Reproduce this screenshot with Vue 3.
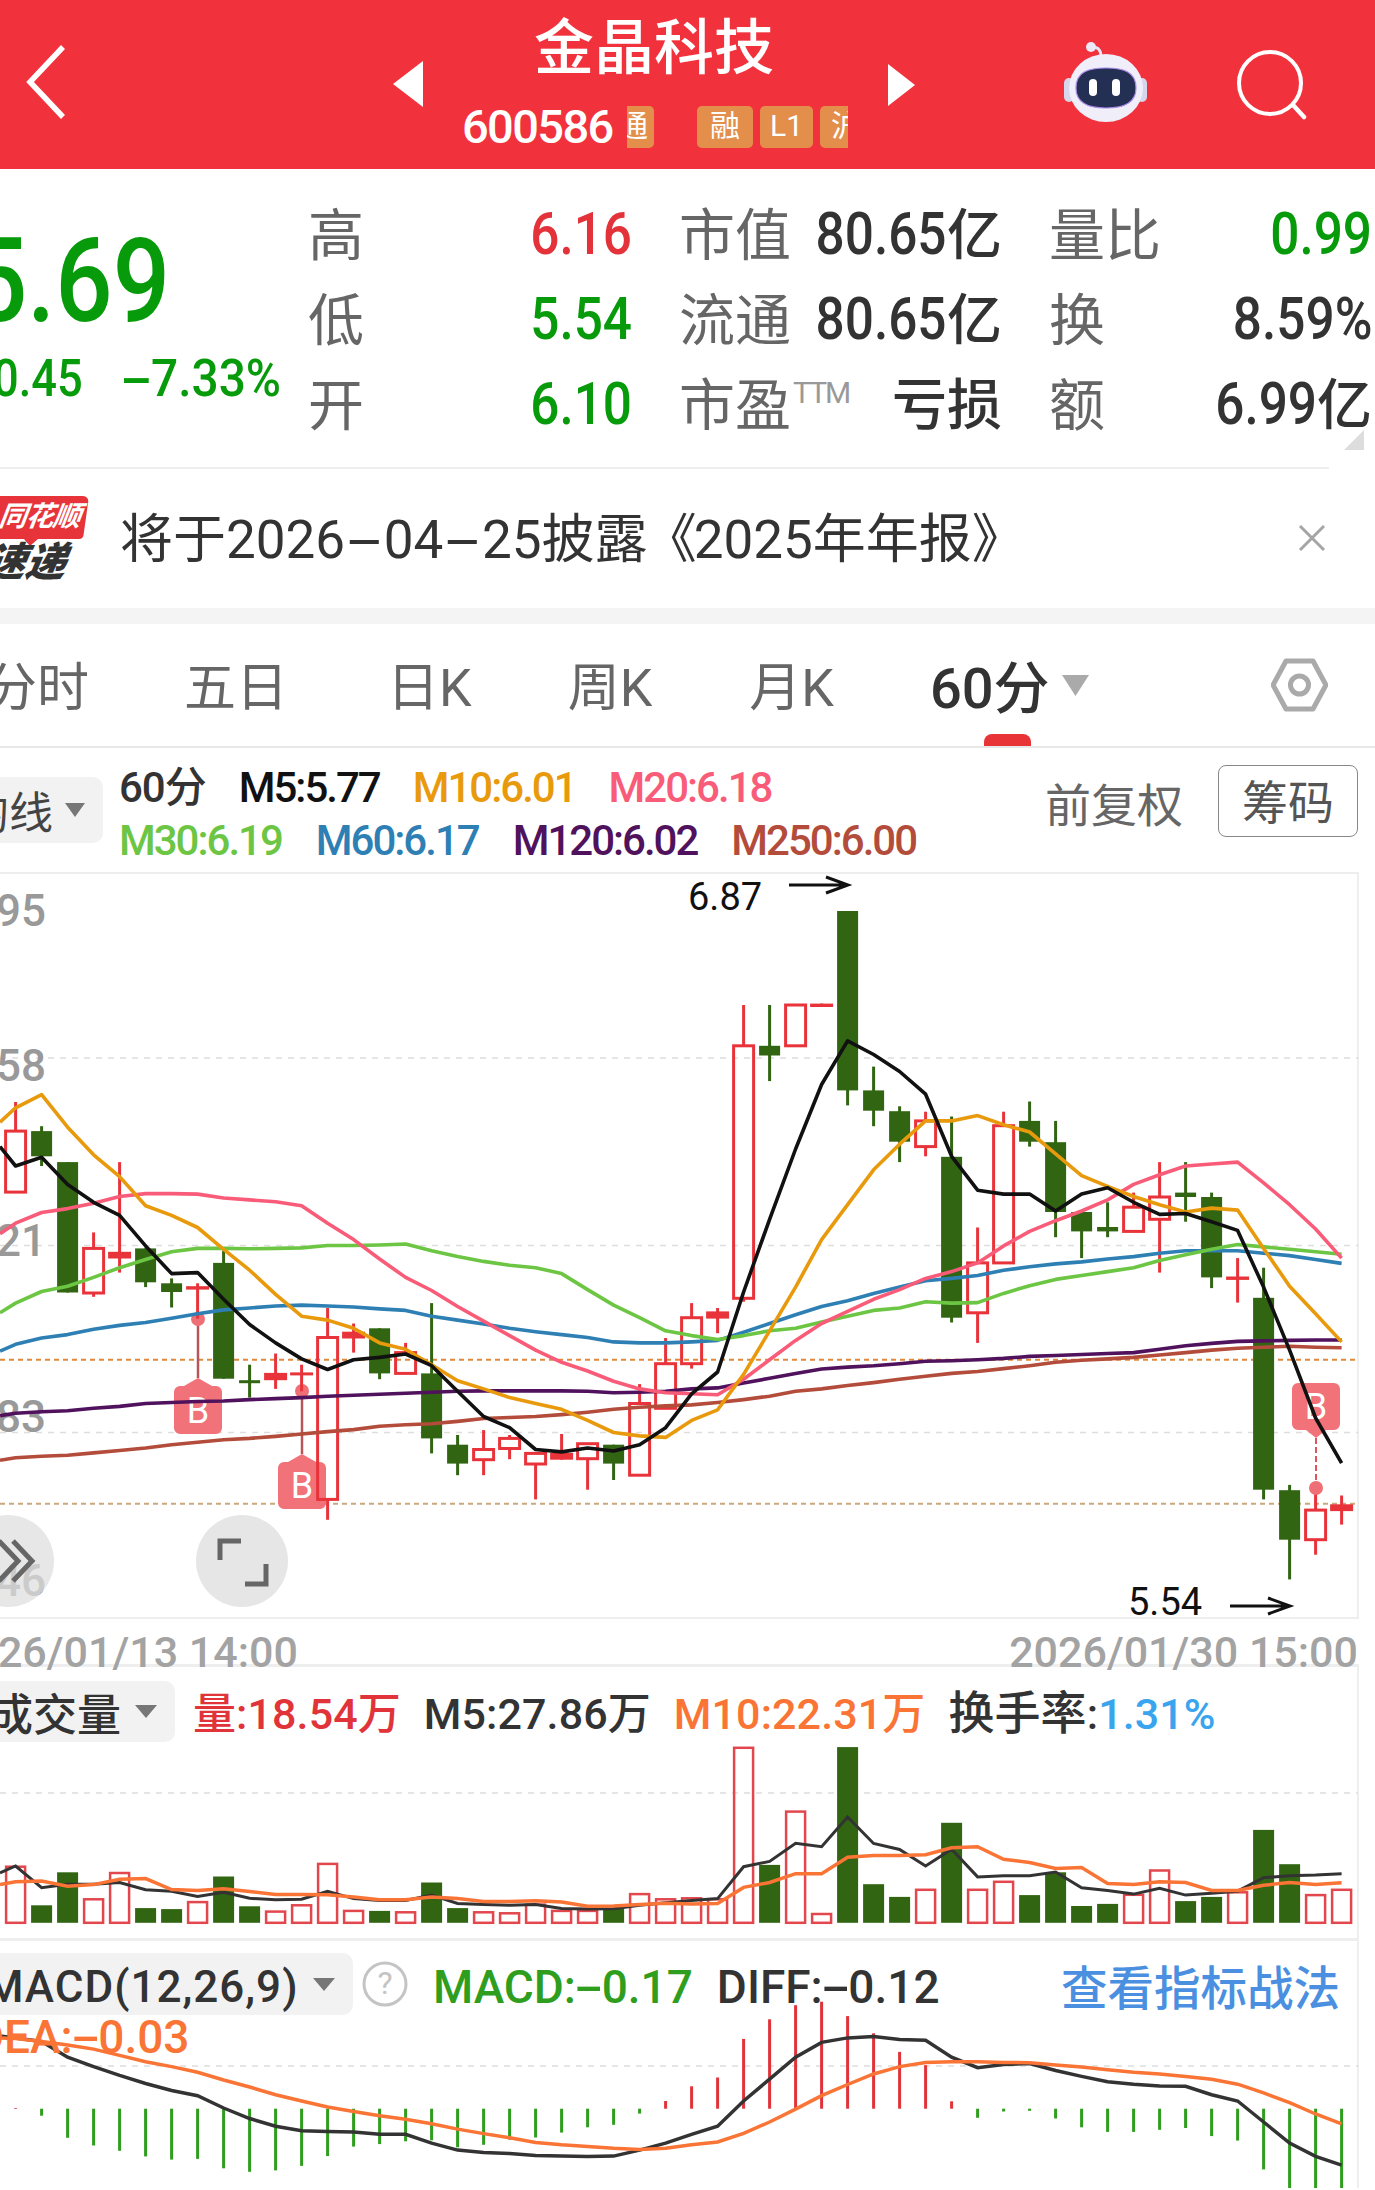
<script setup>
const X = (i) => 15.6 + 26 * i
const yMain = (z) => +(8 + z / 2.0632).toFixed(1)
const yVol = (z) => +(z / 2.851 - 26).toFixed(1)
const yMacd = (z) => +(z / 2.851 - 300).toFixed(1)

const rawCandles = [
  [458,518,644,644,'r'],[508,518,570,590,'g'],[582,582,851,851,'g'],[727,760,852,860,'r'],[582,767,781,810,'f'],
  [760,760,830,840,'g'],[822,832,850,882,'g'],[832,838,845,905,'f'],[765,790,1029,1029,'g'],[1000,1032,1038,1068,'g'],
  [977,1017,1032,1050,'f'],[1000,1016,1022,1055,'f'],[883,944,1278,1320,'r'],[915,932,946,975,'f'],[925,925,1018,1030,'g'],
  [955,975,1018,1018,'r'],[873,1018,1152,1183,'g'],[1145,1165,1204,1228,'g'],[1135,1175,1196,1228,'r'],[1145,1152,1173,1195,'r'],
  [1183,1183,1205,1278,'r'],[1143,1182,1196,1196,'f'],[1163,1163,1194,1258,'r'],[1165,1165,1204,1238,'g'],[1040,1080,1228,1228,'r'],
  [945,998,1090,1090,'r'],[873,903,998,1008,'r'],[883,890,905,935,'f'],[258,342,863,870,'r'],[258,342,362,415,'g'],
  [258,258,342,342,'r'],[255,255,262,262,'f'],[64,64,434,465,'g'],[385,434,476,508,'g'],[467,477,540,582,'g'],
  [478,497,550,570,'r'],[488,571,903,913,'g'],[717,790,893,955,'r'],[478,507,790,790,'r'],[457,497,540,550,'g'],
  [497,541,685,737,'g'],[685,685,725,780,'g'],[665,716,725,737,'g'],[645,675,725,725,'r'],[582,654,700,810,'r'],
  [582,645,654,705,'g'],[645,654,820,842,'g'],[780,818,825,872,'f'],[800,862,1258,1278,'g'],[1248,1259,1361,1443,'g'],
  [1268,1300,1361,1392,'r'],[1270,1288,1302,1330,'f']
]
const candles = rawCandles.map((c, i) => ({
  id: i,
  x: X(i),
  hi: yMain(c[0]),
  top: yMain(c[1]),
  bot: yMain(c[2]),
  lo: yMain(c[3]),
  kind: c[4]
}))

const linePoints = (vals, conv) =>
  vals.map((v, i) => `${i === 0 ? 0 : X(i - 1).toFixed(1)},${conv(v)}`).join(' ')

const maLines = [
  { id: 'm250', color: '#b34c3b', vals: [1197,1192,1189,1187,1182,1177,1172,1165,1160,1155,1152,1148,1143,1138,1134,1127,1124,1122,1117,1111,1109,1107,1103,1098,1092,1088,1085,1083,1078,1072,1065,1055,1050,1043,1037,1030,1024,1018,1014,1008,1002,995,991,988,985,980,975,970,966,964,962,964,965] },
  { id: 'm120', color: '#50125c', vals: [1105,1100,1097,1095,1090,1086,1080,1078,1076,1075,1072,1070,1068,1065,1063,1061,1059,1057,1055,1054,1054,1054,1054,1055,1058,1057,1055,1050,1048,1038,1028,1018,1009,1005,1002,998,993,992,990,987,983,981,979,977,975,968,961,956,952,951,950,949,949] },
  { id: 'm60', color: '#2e7fb4', vals: [972,958,945,938,927,919,913,904,895,887,883,879,877,879,881,885,888,900,908,916,925,932,938,944,953,955,955,953,950,933,915,897,880,868,853,840,827,822,816,805,798,792,788,782,777,770,765,765,765,770,775,783,791] },
  { id: 'm30', color: '#6cc644', vals: [893,873,849,838,820,800,783,767,760,760,761,760,759,754,754,753,751,765,777,787,795,800,812,845,877,903,930,940,948,940,930,925,912,900,888,883,870,873,872,853,837,824,816,808,800,785,773,762,752,757,762,767,772] },
  { id: 'm20', color: '#f95c78', vals: [730,708,686,678,667,653,647,647,648,656,660,664,672,708,742,782,820,847,880,910,940,970,995,1013,1034,1050,1058,1060,1062,1030,990,950,915,890,865,845,822,808,790,755,725,703,683,660,628,608,590,586,582,625,670,720,780] },
  { id: 'm10', color: '#e89a0c', vals: [500,470,443,510,567,612,672,692,717,762,805,855,900,908,925,955,968,1000,1033,1050,1068,1080,1092,1115,1140,1147,1150,1115,1093,1020,930,840,742,670,598,545,497,497,486,505,520,565,610,632,653,670,685,677,681,760,838,895,953] },
  { id: 'm5', color: '#111', vals: [550,590,572,628,665,692,755,812,810,865,917,955,988,1010,990,985,978,1002,1055,1107,1130,1175,1180,1172,1178,1165,1130,1060,1015,850,700,555,422,332,360,395,442,570,640,648,648,683,648,635,665,690,688,705,723,840,970,1110,1203] }
].map((l) => ({ id: l.id, color: l.color, points: linePoints(l.vals, yMain) }))

const volTops = [652,762,668,745,670,770,773,753,680,765,780,762,644,778,778,782,697,770,782,785,760,778,778,772,730,745,742,745,313,647,495,787,311,702,738,718,527,718,695,733,668,764,758,732,663,750,738,725,547,645,733,718]
const volBase = yVol(812)
const vols = volTops.map((t, i) => ({
  id: i,
  x: X(i),
  top: yVol(t),
  h: +(volBase - yVol(t)).toFixed(1),
  green: rawCandles[i][4] === 'g'
}))

const volM5 = linePoints([670,650,712,702,702,697,718,722,737,725,742,746,745,722,743,748,748,733,757,760,762,760,771,773,772,762,755,748,743,652,637,585,595,510,586,603,650,602,681,678,678,667,712,720,730,714,733,728,722,683,678,676,672], yVol)
const volM10 = linePoints([703,695,693,708,703,688,686,717,720,715,723,731,731,732,738,746,746,738,743,751,751,749,753,765,764,760,756,758,757,711,697,672,672,625,620,620,618,598,595,631,640,657,654,700,703,695,697,720,720,705,697,703,698], yVol)

const histEnds = [1340,1362,1425,1447,1462,1478,1487,1485,1512,1522,1518,1505,1477,1450,1443,1435,1432,1452,1445,1430,1424,1410,1395,1388,1356,1320,1278,1253,1143,1087,1047,1037,1078,1127,1180,1218,1321,1368,1350,1348,1370,1395,1408,1408,1402,1397,1420,1433,1515,1640,1640,1640]
const hist = histEnds.map((e, i) => ({ id: i, x: X(i), y2: yMacd(e), red: e < 1342 }))
const histBase = yMacd(1342)
const macdDiff = linePoints([1135,1140,1150,1195,1222,1247,1270,1290,1305,1340,1370,1392,1405,1407,1408,1415,1415,1440,1460,1467,1470,1475,1477,1478,1477,1460,1440,1415,1392,1320,1258,1195,1153,1140,1136,1145,1147,1195,1225,1216,1213,1233,1250,1265,1272,1277,1278,1302,1320,1380,1440,1478,1503], yMacd)
const macdDea = linePoints([1140,1142,1150,1160,1172,1190,1208,1222,1238,1260,1280,1302,1320,1337,1350,1362,1372,1385,1400,1413,1425,1438,1445,1450,1455,1458,1455,1445,1437,1412,1380,1343,1305,1273,1243,1222,1210,1208,1208,1210,1211,1217,1223,1231,1238,1243,1250,1258,1272,1297,1325,1357,1385], yMacd)

const stats = [
  { label: '高', val: '6.16', cls: 'red' },
  { label: '市值', val: '80.65', unit: '亿', cls: 'dark' },
  { label: '量比', val: '0.99', cls: 'green' },
  { label: '低', val: '5.54', cls: 'green' },
  { label: '流通', val: '80.65', unit: '亿', cls: 'dark' },
  { label: '换', val: '8.59%', cls: 'dark' },
  { label: '开', val: '6.10', cls: 'green' },
  { label: '市盈', sup: 'TTM', text: '亏损', cls: 'dark' },
  { label: '额', val: '6.99', unit: '亿', cls: 'dark' }
]
const tabs = [
  { t: '五日', ml: 95 },
  { t: '日K', ml: 99 },
  { t: '周K', ml: 96 },
  { t: '月K', ml: 97 }
]
const row1 = [
  { t: 'M5:5.77', c: 'c5' },
  { t: 'M10:6.01', c: 'c10' },
  { t: 'M20:6.18', c: 'c20' }
]
const row2 = [
  { t: 'M30:6.19', c: 'c30' },
  { t: 'M60:6.17', c: 'c60' },
  { t: 'M120:6.02', c: 'c120' },
  { t: 'M250:6.00', c: 'c250' }
]
</script>

<template>
  <div class="page">
    <header class="top">
      <svg class="back" width="40" height="74" viewBox="0 0 40 74"><path d="M37 2 L4 37 L37 72" fill="none" stroke="#fff" stroke-width="5.5" /></svg>
      <svg class="tri-l" width="30" height="46" viewBox="0 0 30 46"><path d="M30 0 V46 L0 23 Z" fill="#fff" /></svg>
      <div class="center">
        <div class="title">金晶科技</div>
        <div class="subrow">
          <span class="code">600586</span>
          <div class="chips">
            <span class="chip chip-a"><i>通</i></span>
            <span class="chip chip-b">融</span>
            <span class="chip chip-c">L1</span>
            <span class="chip chip-d"><i>沪</i></span>
          </div>
        </div>
      </div>
      <svg class="tri-r" width="27" height="42" viewBox="0 0 27 42"><path d="M0 0 V42 L27 21 Z" fill="#fff" /></svg>
      <svg class="robot" width="83" height="80" viewBox="0 0 83 80">
        <path d="M37 15 C37 6 32 5 28 5" fill="none" stroke="#e9e6f5" stroke-width="3" />
        <circle cx="27" cy="5" r="5" fill="#eceaf6" />
        <rect x="0" y="36" width="10" height="24" rx="5" fill="#d6d6ec" />
        <rect x="73" y="36" width="10" height="24" rx="5" fill="#d6d6ec" />
        <ellipse cx="42" cy="46" rx="37" ry="34" fill="#efeef9" />
        <path d="M12 46 C12 30 24 26 42 26 C60 26 72 30 72 46 C72 61 60 66 42 66 C24 66 12 61 12 46 Z" fill="#233054" stroke="#a98ae8" stroke-width="1.2" />
        <rect x="25" y="37" width="8" height="17" rx="4" fill="#fff" />
        <rect x="48" y="37" width="8" height="17" rx="4" fill="#fff" />
      </svg>
      <svg class="search" width="70" height="72" viewBox="0 0 70 72">
        <circle cx="33" cy="33" r="31" fill="none" stroke="#fff" stroke-width="4" />
        <path d="M56 55 L67 67" fill="none" stroke="#fff" stroke-width="4.5" stroke-linecap="round" />
      </svg>
    </header>

    <section class="quote">
      <div class="price-col">
        <div class="price"><span>5.69</span></div>
        <div class="change"><span class="chg">-0.45</span><span class="pct"><span class="hy hy-pct">-</span>7.33%</span></div>
      </div>
      <div class="stats">
        <div v-for="s in stats" :key="s.label" class="stat">
          <span class="stat-l">{{ s.label }}<sup v-if="s.sup">{{ s.sup }}</sup></span>
          <span class="stat-v" :class="s.cls">
            <span v-if="s.val" class="digits">{{ s.val }}</span>
            <span v-if="s.unit" class="unit">{{ s.unit }}</span>
            <span v-if="s.text" class="loss">{{ s.text }}</span>
          </span>
        </div>
      </div>
      <span class="corner"></span>
    </section>

    <section class="notice">
      <div class="logo">
        <div class="logo-top"><span>同花顺</span></div>
        <div class="logo-bot">速递</div>
      </div>
      <div class="notice-text">将于2026<span class="hy hy-note">-</span>04<span class="hy hy-note">-</span>25披露<span class="bk-l">《</span>2025年年报<span class="bk-r">》</span></div>
      <svg class="close" width="28" height="28" viewBox="0 0 28 28"><path d="M2 2 L26 26 M26 2 L2 26" stroke="#a5a5a5" stroke-width="3" /></svg>
    </section>
    <div class="band"></div>

    <nav class="tabs">
      <span class="tab tab-first">分时</span>
      <span v-for="t in tabs" :key="t.t" class="tab" :style="{ marginLeft: t.ml + 'px' }">{{ t.t }}</span>
      <span class="tab tab-on">60分</span>
      <svg class="tab-tri" width="27" height="21" viewBox="0 0 27 21"><path d="M0 0 H27 L13.5 21 Z" fill="#aaa" /></svg>
      <svg class="hex" width="57" height="54" viewBox="0 0 57 54">
        <path d="M15 3 H42 L55 27 L42 51 H15 L2 27 Z" fill="none" stroke="#aaa" stroke-width="5" stroke-linejoin="round" />
        <circle cx="28.5" cy="27" r="9" fill="none" stroke="#aaa" stroke-width="5" />
      </svg>
      <b class="ink"></b>
    </nav>

    <div class="legend">
      <div class="sel sel-ma"><span class="sel-t">均线</span><span class="tri"></span></div>
      <div class="legend-rows">
        <div class="legend-row">
          <span class="lg-first">60分</span>
          <span v-for="l in row1" :key="l.t" :class="l.c">{{ l.t }}</span>
        </div>
        <div class="legend-row row-b">
          <span v-for="l in row2" :key="l.t" :class="l.c">{{ l.t }}</span>
        </div>
      </div>
      <span class="fq">前复权</span>
      <span class="chouma">筹码</span>
    </div>

    <svg class="chart-main" width="1359" height="747" viewBox="0 0 1359 747">
      <line x1="0" y1="1" x2="1358" y2="1" stroke="#eee" stroke-width="2" />
      <line x1="1358" y1="0" x2="1358" y2="747" stroke="#eee" stroke-width="2" />
      <line x1="0" y1="746" x2="1358" y2="746" stroke="#eee" stroke-width="2" />
      <g stroke="#ddd" stroke-width="1.5" stroke-dasharray="6 6">
        <line x1="0" :y1="yMain(367)" x2="1358" :y2="yMain(367)" />
        <line x1="0" :y1="yMain(754)" x2="1358" :y2="yMain(754)" />
        <line x1="0" :y1="yMain(1140)" x2="1358" :y2="yMain(1140)" />
      </g>
      <line x1="0" :y1="yMain(990)" x2="1358" :y2="yMain(990)" stroke="#e0893c" stroke-width="2" stroke-dasharray="5 4" />
      <line x1="0" :y1="yMain(1287)" x2="1358" :y2="yMain(1287)" stroke="#c9a87c" stroke-width="2" stroke-dasharray="5 4" />

      <g class="axis">
        <text x="46" y="54" text-anchor="end">6.95</text>
        <text x="46" y="209" text-anchor="end">6.58</text>
        <text x="46" y="384" text-anchor="end">6.21</text>
        <text x="46" y="560" text-anchor="end">5.83</text>
        <text x="46" y="724" text-anchor="end">5.46</text>
      </g>

      <g class="marks">
        <line x1="198" y1="447" x2="198" y2="506" stroke="#b85558" stroke-width="2.5" />
        <circle cx="198" cy="447" r="7" fill="#ee6f76" />
        <path d="M174 520 a6 6 0 0 1 6 -6 H184 L198 506 L212 514 H216 a6 6 0 0 1 6 6 V556 a6 6 0 0 1 -6 6 H180 a6 6 0 0 1 -6 -6 Z" fill="#f2727a" />
        <text x="198" y="551" text-anchor="middle">B</text>
        <line x1="302" y1="519" x2="302" y2="582" stroke="#b85558" stroke-width="2.5" />
        <circle cx="302" cy="519" r="7" fill="#ee6f76" />
        <path d="M278 596 a6 6 0 0 1 6 -6 H288 L302 582 L316 590 H320 a6 6 0 0 1 6 6 V631 a6 6 0 0 1 -6 6 H284 a6 6 0 0 1 -6 -6 Z" fill="#f2727a" />
        <text x="302" y="626" text-anchor="middle">B</text>
        <line x1="1316" y1="566" x2="1316" y2="616" stroke="#d8565c" stroke-width="2" stroke-dasharray="6 3" />
        <circle cx="1316" cy="616" r="7" fill="#ee6f76" />
        <path d="M1292 517 a6 6 0 0 1 6 -6 H1334 a6 6 0 0 1 6 6 V552 a6 6 0 0 1 -6 6 H1326 L1316 566 L1306 558 H1298 a6 6 0 0 1 -6 -6 Z" fill="#f2727a" />
        <text x="1316" y="547" text-anchor="middle">B</text>
      </g>

      <g v-for="c in candles" :key="c.id">
        <template v-if="c.kind === 'g'">
          <line :x1="c.x" :y1="c.hi" :x2="c.x" :y2="c.lo" stroke="#316512" stroke-width="3" />
          <rect :x="c.x - 10.5" :y="c.top" width="21" :height="Math.max(c.bot - c.top, 3)" fill="#316512" />
        </template>
        <template v-else-if="c.kind === 'f'">
          <line :x1="c.x" :y1="c.hi" :x2="c.x" :y2="c.lo" stroke="#e8333a" stroke-width="3" />
          <rect :x="c.x - 11.5" :y="c.top" width="23" :height="Math.max(c.bot - c.top, 3)" fill="#e8333a" />
        </template>
        <template v-else>
          <line :x1="c.x" :y1="c.hi" :x2="c.x" :y2="c.top" stroke="#e8333a" stroke-width="3" />
          <line :x1="c.x" :y1="c.bot" :x2="c.x" :y2="c.lo" stroke="#e8333a" stroke-width="3" />
          <rect :x="c.x - 10" :y="c.top" width="20" :height="c.bot - c.top" fill="none" stroke="#e8333a" stroke-width="3" />
        </template>
      </g>

      <polyline v-for="l in maLines" :key="l.id" :points="l.points" fill="none" :stroke="l.color" stroke-width="3.6" stroke-linejoin="round" />

      <text class="ext" x="688" y="38">6.87</text>
      <path d="M789 13 H847 M826 5 L848 13 L826 21" fill="none" stroke="#111" stroke-width="3" />
      <text class="ext" x="1128" y="743">5.54</text>
      <path d="M1230 734 H1289 M1268 726 L1290 734 L1268 742" fill="none" stroke="#111" stroke-width="3" />

      <circle cx="8" cy="689" r="46" fill="#dedede" fill-opacity=".72" />
      <path d="M-1 669 L18 689 L-1 709 M13 669 L32 689 L13 709" fill="none" stroke="#666" stroke-width="5" />
      <circle cx="242" cy="689" r="46" fill="#e6e6e6" />
      <path d="M241 669 H220 V688 M245 712 H266 V692" fill="none" stroke="#666" stroke-width="5" />
    </svg>

    <div class="times">
      <span class="time-l">2026/01/13 14:00</span>
      <span>2026/01/30 15:00</span>
    </div>

    <section class="vol">
      <svg class="layer" width="1359" height="274" viewBox="0 0 1359 274">
        <line x1="0" :y1="yVol(442)" x2="1358" :y2="yVol(442)" stroke="#ddd" stroke-width="1.5" stroke-dasharray="6 6" />
        <g v-for="b in vols" :key="b.id">
          <rect v-if="b.green" :x="b.x - 10.5" :y="b.top" width="21" :height="b.h" fill="#316512" />
          <rect v-else :x="b.x - 9.5" :y="b.top" width="19" :height="b.h" fill="none" stroke="#e2474e" stroke-width="2.5" />
        </g>
        <polyline :points="volM5" fill="none" stroke="#333" stroke-width="3" />
        <polyline :points="volM10" fill="none" stroke="#f97435" stroke-width="3.5" />
      </svg>
      <div class="vol-head">
        <div class="sel sel-vol"><span class="sel-t">成交量</span><span class="tri tri-big"></span></div>
        <span class="vl red-t">量:18.54万</span>
        <span class="vl dark-t">M5:27.86万</span>
        <span class="vl orange-t">M10:22.31万</span>
        <span class="vl dark-t"><span class="big-cjk">换手率</span>:<span class="blue-t">1.31%</span></span>
      </div>
    </section>

    <section class="macd">
      <svg class="layer" width="1359" height="250" viewBox="0 0 1359 250">
        <line x1="0" :y1="yMacd(1220)" x2="1358" :y2="yMacd(1220)" stroke="#ddd" stroke-width="1.5" stroke-dasharray="6 6" />
        <line v-for="h in hist" :key="h.id" :x1="h.x" :y1="histBase" :x2="h.x" :y2="h.y2" :stroke="h.red ? '#e0333a' : '#2f9e1e'" stroke-width="3" />
        <polyline :points="macdDiff" fill="none" stroke="#333" stroke-width="3.5" />
        <polyline :points="macdDea" fill="none" stroke="#f97435" stroke-width="3.5" />
      </svg>
      <div class="macd-head">
        <div class="sel sel-macd"><span class="sel-t">MACD(12,26,9)</span><span class="tri tri-big"></span></div>
        <svg class="help" width="46" height="46" viewBox="0 0 46 46">
          <circle cx="23" cy="23" r="21" fill="none" stroke="#c4c4c4" stroke-width="3" />
          <text x="23" y="33" text-anchor="middle">?</text>
        </svg>
        <span class="ml green-t">MACD:<span class="hy hy-m">-</span>0.17</span>
        <span class="ml dark-t diff">DIFF:<span class="hy hy-m">-</span>0.12</span>
        <span class="link">查看指标战法</span>
      </div>
      <div class="dea">DEA:<span class="hy hy-m">-</span>0.03</div>
    </section>
  </div>
</template>

<style scoped>
.page {
  position: relative;
  width: 1375px;
  height: 2190px;
  overflow: hidden;
  background: #fff;
  font-family: Roboto, "Noto Sans CJK SC", sans-serif;
  color: #333;
}
.hy { display: inline-block; }
.hy-pct { transform: scaleX(2); margin: 0 7px; }
.hy-note { transform: scaleX(2.3); margin: 0 12px; }
.hy-m { transform: scaleX(1.9); margin: 0 5px; }
.bk-l { letter-spacing: -7px; position: relative; left: -4px; }
.bk-r { letter-spacing: 0; }
.top {
  height: 169px;
  background: #f1323c;
  display: flex;
  align-items: flex-start;
  color: #fff;
}
.back { margin: 45px 0 0 26px; flex: none; }
.tri-l { margin: 61px 0 0 327px; flex: none; }
.tri-r { margin: 64px 0 0 0; flex: none; }
.center { width: 465px; flex: none; }
.title {
  font-size: 60px;
  line-height: 60px;
  margin-top: 13px;
  margin-right: 3px;
  text-align: center;
  white-space: nowrap;
  font-weight: 500;
  font-family: "Noto Sans CJK SC", sans-serif;
}
.subrow { display: flex; align-items: center; margin-top: 33px; height: 42px; }
.code {
  margin-left: 39px;
  width: 165px;
  font-size: 47px;
  line-height: 42px;
  letter-spacing: -1.6px;
  flex: none;
  font-weight: 500;
}
.chips { display: flex; margin-left: 0; }
.chip {
  height: 42px;
  line-height: 40px;
  background: #e38f4b;
  color: #fff;
  font-size: 30px;
  text-align: center;
  border-radius: 5px;
  overflow: hidden;
  flex: none;
}
.chip i { font-style: normal; display: block; }
.chip-a { width: 27px; border-radius: 0 5px 5px 0; margin-right: 43px; }
.chip-a i { margin-left: -15px; width: 42px; }
.chip-b { width: 56px; margin-right: 7px; }
.chip-c { width: 53px; margin-right: 7px; }
.chip-d { width: 28px; border-radius: 5px 0 0 5px; }
.chip-d i { margin-left: 11px; width: 42px; text-align: left; }
.robot { margin: 42px 0 0 149px; flex: none; }
.search { margin: 50px 0 0 90px; flex: none; }

.quote {
  position: relative;
  height: 299px;
  display: flex;
}
.quote::after {
  content: "";
  position: absolute;
  left: 0;
  bottom: -1px;
  width: 1329px;
  height: 2px;
  background: #eee;
}
.price-col { width: 308px; flex: none; }
.price {
  width: 170px;
  height: 100px;
  margin-top: 62px;
  display: flex;
  justify-content: flex-end;
  font-size: 116px;
  line-height: 100px;
  font-weight: 500;
  color: #079b0b;
}
.price span { transform: scaleX(.87); transform-origin: right center; white-space: nowrap; }
.change {
  width: 281px;
  margin-top: 17px;
  display: flex;
  justify-content: flex-end;
  align-items: center;
  gap: 25px;
  height: 60px;
  font-size: 52px;
  font-weight: 500;
  color: #079b0b;
  white-space: nowrap;
}
.chg { transform: scaleX(.87); transform-origin: right center; }
.pct { transform: scaleX(.92); transform-origin: right center; }
.stats {
  flex: none;
  display: grid;
  grid-template-columns: 324px 323px 323px;
  grid-auto-rows: 85px;
  column-gap: 47px;
  padding-top: 20px;
}
.stat { display: flex; align-items: center; justify-content: space-between; white-space: nowrap; }
.stat-l { font-size: 56px; color: #666; line-height: 83px; padding-bottom: 3px; font-family: "Noto Sans CJK SC", sans-serif; font-weight: 400; }
.stat-l sup { font-size: 30px; color: #999; font-family: Roboto, sans-serif; vertical-align: 22px; line-height: 0; letter-spacing: -2px; margin-left: 2px; }
.stat-v { display: flex; align-items: center; }
.digits { font-size: 59px; transform: scaleX(.87); transform-origin: right center; line-height: 85px; padding-top: 4px; font-weight: 500; }
.unit { font-size: 55px; line-height: 85px; padding-bottom: 2px; font-family: "Noto Sans CJK SC", sans-serif; font-weight: 500; }
.loss { font-size: 55px; line-height: 83px; padding-bottom: 3px; font-family: "Noto Sans CJK SC", sans-serif; font-weight: 500; }
.red { color: #e4323a; }
.green { color: #079b0b; }
.dark { color: #333; }
.corner {
  position: absolute;
  right: 11px;
  bottom: 18px;
  border-style: solid;
  border-width: 0 0 20px 20px;
  border-color: transparent transparent #ddd transparent;
}
.notice { height: 140px; display: flex; align-items: center; }
.logo { width: 87px; margin-right: 33px; flex: none; height: 84px; overflow: visible; }
.logo-top {
  position: relative;
  height: 43px;
  width: 92px;
  margin-left: -6px;
  background: #e7343a;
  border-radius: 0 6px 4px 4px;
  transform: skewX(-8deg);
  text-align: right;
  padding-right: 6px;
  box-sizing: border-box;
  line-height: 42px;
}
.logo-top span { color: #fff; font-size: 28px; font-weight: 700; font-style: italic; letter-spacing: -1px; }
.logo-top::after {
  content: "";
  position: absolute;
  left: 33px;
  top: 43px;
  border-style: solid;
  border-width: 7px 7px 0 7px;
  border-color: #e7343a transparent transparent transparent;
}
.logo-bot {
  margin-top: 6px;
  margin-left: -14px;
  font-size: 40px;
  line-height: 36px;
  font-weight: 900;
  font-style: italic;
  color: #333;
  white-space: nowrap;
  transform: skewX(-10deg);
}
.notice-text { font-size: 53px; color: #333; white-space: nowrap; flex: none; font-weight: 400; line-height: 70px; margin-top: 3px; }
.close { margin-left: auto; margin-right: 49px; flex: none; }
.band { height: 16px; background: #f4f4f4; }
.tabs {
  position: relative;
  height: 122px;
  border-bottom: 2px solid #e8e8e8;
  display: flex;
  align-items: center;
  white-space: nowrap;
}
.tab { font-size: 52px; color: #666; font-weight: 400; flex: none; margin-top: -4px; }
.tab-first { margin-left: -15px; }
.tab-on { margin-left: 96px; color: #333; font-weight: 500; font-size: 56px; }
.ink {
  position: absolute;
  left: 984px;
  bottom: 0;
  width: 47px;
  height: 12px;
  border-radius: 8px 8px 0 0;
  background: #e83337;
}
.tab-tri { margin-left: 12px; flex: none; }
.hex { margin-left: auto; margin-right: 47px; flex: none; }

.legend { height: 124px; display: flex; white-space: nowrap; }
.sel {
  display: flex;
  align-items: center;
  background: #f2f2f2;
  border-radius: 0 10px 10px 0;
  flex: none;
  overflow: hidden;
}
.sel-ma { width: 103px; height: 66px; margin-top: 29px; }
.sel-t { flex: none; font-weight: 500; }
.sel-ma .sel-t { margin-left: -35px; font-size: 44px; color: #444; font-weight: 400; }
.tri {
  flex: none;
  margin-left: 12px;
  border-style: solid;
  border-width: 14px 10px 0 10px;
  border-color: #777 transparent transparent transparent;
}
.tri-big { border-width: 13px 11px 0 11px; margin-left: 14px; }
.legend-rows { margin-left: 16px; width: 895px; flex: none; }
.legend-row {
  display: flex;
  gap: 33px;
  font-size: 42px;
  font-weight: 500;
  letter-spacing: -2px;
  line-height: 50px;
  margin-top: 15px;
  height: 50px;
}
.row-b { margin-top: 3px; gap: 34px; }
.lg-first { color: #333; letter-spacing: -1px; }
.c5 { color: #111; }
.c10 { color: #e89a0c; }
.c20 { color: #f95c78; }
.c30 { color: #6cc644; }
.c60 { color: #2e7fb4; }
.c120 { color: #50125c; }
.c250 { color: #b34c3b; }
.fq { margin-left: 31px; font-size: 46px; color: #666; line-height: 66px; margin-top: 25px; flex: none; font-weight: 400; }
.chouma {
  margin-left: 35px;
  margin-top: 17px;
  width: 138px;
  height: 70px;
  border: 1.5px solid #888;
  border-radius: 8px;
  font-size: 46px;
  line-height: 74px;
  color: #555;
  text-align: center;
  flex: none;
  font-weight: 400;
}
.chart-main { display: block; }
.axis text { font-size: 44px; fill: #999; font-weight: 500; font-family: Roboto, sans-serif; }
.marks text { font-size: 36px; fill: #fff; font-family: Roboto, sans-serif; }
.ext { font-size: 38px; fill: #111; font-family: Roboto, sans-serif; }
.times {
  position: relative;
  z-index: 2;
  height: 45px;
  width: 1358px;
  display: flex;
  justify-content: space-between;
  font-size: 43px;
  font-weight: 500;
  line-height: 66px;
  color: #a3a3a3;
  white-space: nowrap;
}
.time-l { margin-left: -51px; }
.vol {
  position: relative;
  height: 271px;
  width: 1357px;
  border-top: 3px solid #eee;
  border-right: 2px solid #eee;
  white-space: nowrap;
}
.layer { position: absolute; left: 0; top: -3px; }
.vol-head { position: relative; display: flex; align-items: center; padding-top: 13px; }
.sel-vol { width: 175px; height: 61px; }
.sel-vol .sel-t { margin-left: -11px; font-size: 44px; color: #333; }
.vl { font-size: 43px; margin-left: 23px; flex: none; font-weight: 500; line-height: 57px; padding-top: 5px; letter-spacing: .1px; }
.sel-vol + .vl { margin-left: 18px; }
.red-t { color: #e0333a; }
.dark-t { color: #333; }
.orange-t { color: #f97435; }
.blue-t { color: #3aa5ee; }
.green-t { color: #2f9e1e; }
.big-cjk { font-size: 46px; }
.macd {
  position: relative;
  height: 247px;
  width: 1357px;
  border-top: 3px solid #eee;
  border-right: 2px solid #eee;
  white-space: nowrap;
}
.macd-head { position: relative; display: flex; align-items: center; padding-top: 12px; height: 62px; }
.sel-macd { width: 353px; height: 62px; }
.sel-macd .sel-t { margin-left: -15px; font-size: 44px; letter-spacing: 1px; color: #333; line-height: 70px; padding-top: 6px; }
.help { margin-left: 9px; flex: none; }
.help text { font-size: 32px; fill: #c4c4c4; font-family: Roboto, sans-serif; }
.ml { font-size: 46px; margin-left: 25px; flex: none; font-weight: 500; line-height: 70px; padding-top: 6px; }
.diff { margin-left: 24px; }
.link { margin-left: auto; margin-right: 17px; font-size: 46.5px; color: #4a8fe0; flex: none; font-weight: 500; font-family: "Noto Sans CJK SC", sans-serif; }
.dea { position: relative; margin: 1px 0 0 -26px; font-size: 46px; font-weight: 500; line-height: 42px; color: #f97435; }
</style>

<style>
html, body { margin: 0; background: #fff; }
</style>
